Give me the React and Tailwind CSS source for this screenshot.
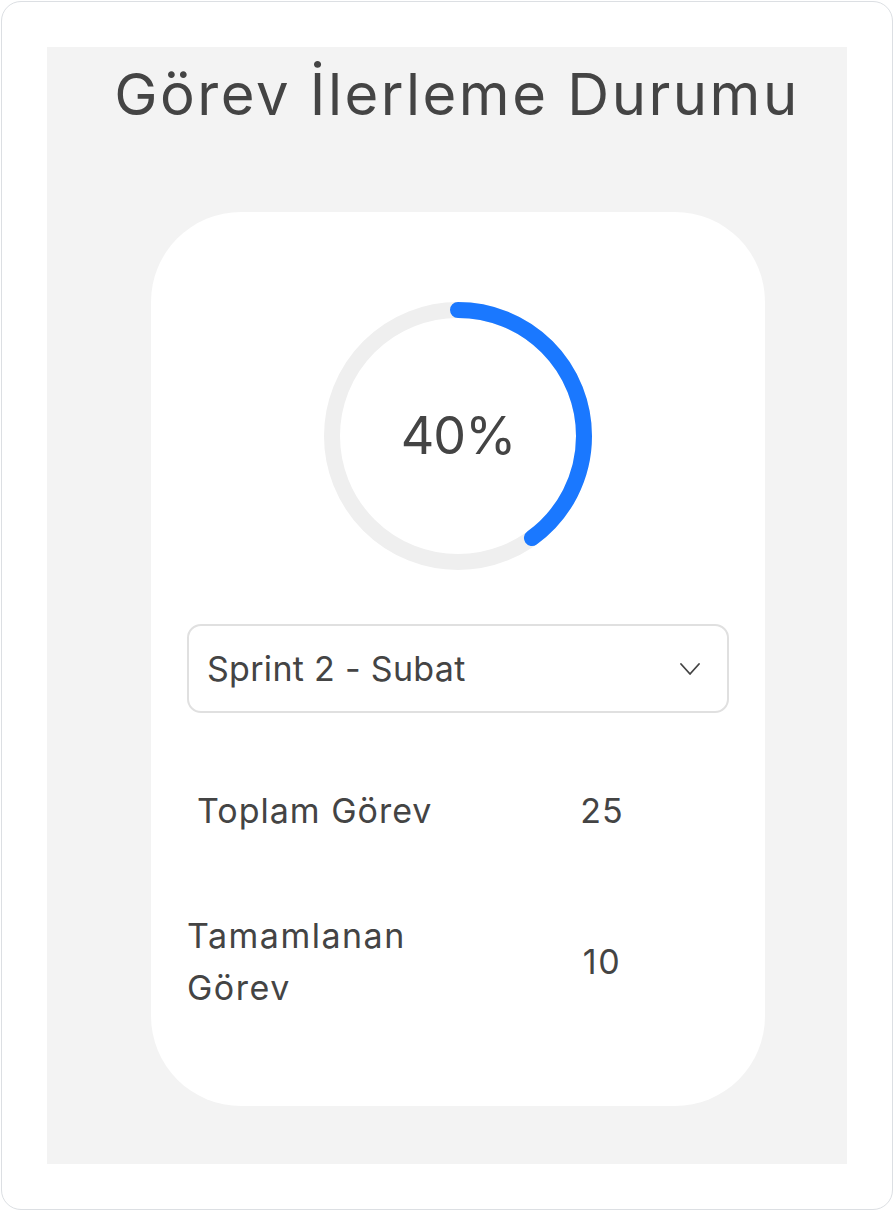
import React from 'react';

const font = { fontFamily: 'Inter, "Open Sans", sans-serif' };

const ProgressRing = ({ percent }) => {
    const r = 126;
    const c = 2 * Math.PI * r;
    return (
        <div className="relative w-[268px] h-[268px]">
            <svg width="268" height="268" viewBox="0 0 268 268" className="-rotate-90">
                <circle cx="134" cy="134" r={r} fill="none" stroke="#efefef" strokeWidth="16" />
                <circle
                    cx="134"
                    cy="134"
                    r={r}
                    fill="none"
                    stroke="#1a78ff"
                    strokeWidth="16"
                    strokeLinecap="round"
                    strokeDasharray={`${(c * percent) / 100} ${c}`}
                />
            </svg>
            <div className="absolute inset-0 flex items-center justify-center text-[52px] tracking-[-1px] text-[#444]">
                {percent}%
            </div>
        </div>
    );
};

const App = () => {
    return (
        <div className="w-[894px] h-[1211px] bg-white p-px" style={font}>
            <div className="w-full h-full border border-[#dcdfe3] rounded-[20px] pt-[45px] px-[45px]">
                <div className="w-[800px] h-[1117px] bg-[#f3f3f3] pt-[10px]">
                    <h1 className="text-center text-[58px] leading-[74px] tracking-[2.5px] text-[#444] pl-[20px]">
                        Görev İlerleme Durumu
                    </h1>
                    <div className="ml-[104px] mt-[81px] w-[614px] h-[894px] bg-white rounded-[90px] pt-[90px] px-9">
                        <div className="flex justify-center">
                            <ProgressRing percent={40} />
                        </div>
                        <div className="mt-[54px] h-[89px] border-2 border-[#e0e0e0] rounded-[14px] flex items-center justify-between pl-[18px] pr-[27px] text-[34px] tracking-[0.3px] text-[#444]">
                            <span>Sprint 2 - Subat</span>
                            <svg width="20" height="12" viewBox="0 0 20 12" fill="none">
                                <polyline points="1,1 10,11 19,1" stroke="#444" strokeWidth="1.8" strokeLinecap="round" strokeLinejoin="round" />
                            </svg>
                        </div>
                        <div className="mt-[72px] flex items-center text-[34px] leading-[52px] tracking-[1px] text-[#444]">
                            <div className="w-[356px] pl-[10px]">Toplam Görev</div>
                            <div className="w-[118px] text-center">25</div>
                        </div>
                        <div className="mt-[73px] flex items-center text-[34px] leading-[52px] tracking-[1.5px] text-[#444]">
                            <div className="w-[356px]">
                                Tamamlanan
                                <br />
                                Görev
                            </div>
                            <div className="w-[118px] text-center">10</div>
                        </div>
                    </div>
                </div>
            </div>
        </div>
    );
};

export default App;
